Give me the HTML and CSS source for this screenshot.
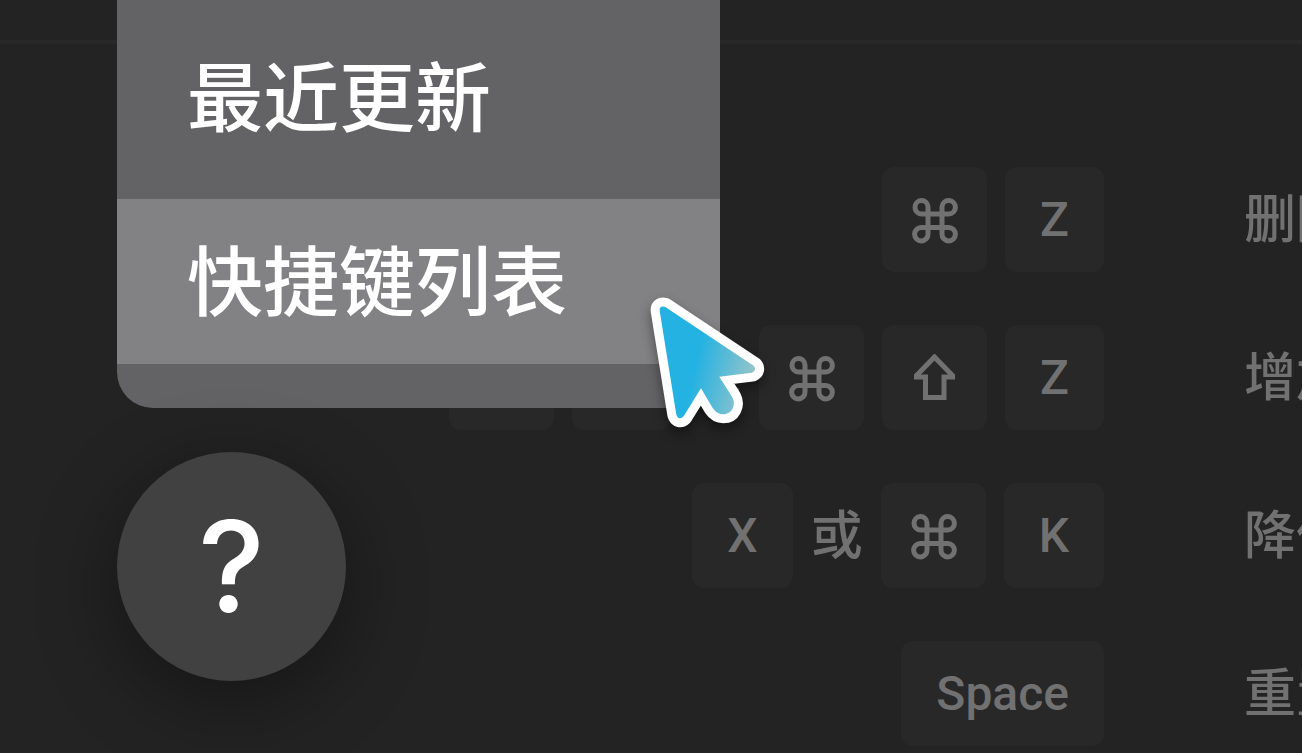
FILE: index.html
```html
<!DOCTYPE html>
<html lang="zh-CN">
<head>
    <meta charset="UTF-8">
    <meta name="viewport" content="width=device-width, initial-scale=1.0">
    <title>快捷键列表</title>
    <link rel="stylesheet" href="styles.css">
</head>
<body>
    <svg class="symbols" aria-hidden="true">
        <symbol id="command" viewBox="0 0 48 48">
            <path d="M17 18H10.500A6.500 6.700 0 1 1 17 11V38A6.700 6.700 0 1 1 10.300 31.500H37.700A6.700 6.700 0 1 1 31 38V11A6.700 6.700 0 1 1 37.700 18Z"/>
        </symbol>
        <symbol id="shift" viewBox="0 0 48 48">
            <path d="M23.500 3L41.500 21.500V23H33V43.500H14.500V23H5.500V21.500Z"/>
        </symbol>
    </svg>

    <header class="topbar"></header>

    <main class="shortcuts">
        <div class="row">
            <div class="keys">
                <kbd><svg class="icon"><use href="#command"/></svg></kbd>
                <kbd>Z</kbd>
            </div>
            <div class="label">删除</div>
        </div>
        <div class="row">
            <div class="keys">
                <kbd><svg class="icon"><use href="#command"/></svg></kbd>
                <kbd>Y</kbd>
                <span>或</span>
                <kbd><svg class="icon"><use href="#command"/></svg></kbd>
                <kbd><svg class="icon"><use href="#shift"/></svg></kbd>
                <kbd>Z</kbd>
            </div>
            <div class="label">增加</div>
        </div>
        <div class="row">
            <div class="keys">
                <kbd>X</kbd>
                <span>或</span>
                <kbd><svg class="icon"><use href="#command"/></svg></kbd>
                <kbd>K</kbd>
            </div>
            <div class="label">降低</div>
        </div>
        <div class="row">
            <div class="keys">
                <kbd>Space</kbd>
            </div>
            <div class="label">重置</div>
        </div>
    </main>

    <nav class="menu">
        <button class="menu-item">最近更新</button>
        <button class="menu-item active">快捷键列表</button>
    </nav>

    <button class="help">?</button>

    <svg class="cursor" viewBox="80 70 366 420" aria-hidden="true">
        <defs>
            <linearGradient id="cursor-fill" gradientUnits="userSpaceOnUse" x1="235" y1="250" x2="405" y2="290">
                <stop offset="0" stop-color="#24b2e2"/>
                <stop offset="1" stop-color="#94c4ca"/>
            </linearGradient>
        </defs>
        <path d="M118 123Q117 107 135 112L400 288Q411 301 395 309L297 321L336 383C348 407 335 434 309 434Q290 434 277 415L242 356L190 440Q176 454 168 435Z"/>
    </svg>
</body>
</html>
```
FILE: styles.css
```css
body {
    font-family: Roboto, "Noto Sans CJK SC", sans-serif;
    margin: 0;
    min-height: 100vh;
    background-color: #232323;
    color: #717171;
    overflow: hidden;
    position: relative;
}
.symbols {
    display: none;
}
.topbar {
    height: 40px;
    border-bottom: 4px solid #282828;
}
.shortcuts {
    display: flex;
    flex-direction: column;
    gap: 53px;
    padding-top: 123px;
}
.row {
    display: grid;
    grid-template-columns: 1fr 198px;
    align-items: center;
    font-size: 48px;
    font-weight: 500;
    line-height: 60px;
}
.keys {
    display: flex;
    justify-content: flex-end;
    align-items: center;
    gap: 18px;
}
.keys span,
.label {
    padding-bottom: 8px;
    font-family: "Noto Sans CJK SC", sans-serif;
    font-size: 52px;
}
.keys kbd {
    box-sizing: border-box;
    display: flex;
    align-items: center;
    height: 105px;
    padding: 0 35px;
    border-radius: 12px;
    background-color: #282828;
    font-family: inherit;
}
.keys kbd:has(svg) {
    padding: 0 28px 0 29px;
}
.icon {
    width: 48px;
    height: 48px;
    fill: none;
    stroke: #717171;
    stroke-width: 5;
}
.label {
    padding-left: 140px;
    white-space: nowrap;
    overflow: hidden;
}
.menu {
    box-sizing: border-box;
    position: absolute;
    top: 0;
    left: 117px;
    width: 603px;
    padding: 15px 0 44px;
    display: flex;
    flex-direction: column;
    gap: 19px;
    border-radius: 0 0 36px 36px;
    background-color: #636365;
}
.menu-item {
    height: 165px;
    padding: 0 70px 10px;
    border: none;
    background: none;
    color: #fff;
    font-family: "Noto Sans CJK SC", sans-serif;
    font-size: 76px;
    font-weight: 500;
    line-height: 90px;
    text-align: left;
    cursor: pointer;
}
.menu-item.active {
    background-color: #828284;
}
.help {
    position: absolute;
    left: 117px;
    bottom: 72px;
    width: 229px;
    height: 229px;
    padding: 0 0 2px;
    border: none;
    border-radius: 50%;
    background-color: #414141;
    box-shadow: 0 20px 80px rgba(0, 0, 0, 0.4);
    color: #fff;
    font-family: Inter, sans-serif;
    font-size: 126px;
    font-weight: 500;
    cursor: pointer;
}
.cursor {
    position: absolute;
    left: 647px;
    top: 293px;
    width: 122px;
    height: 140px;
    overflow: visible;
    fill: url(#cursor-fill);
    stroke: #fff;
    stroke-width: 54;
    stroke-linejoin: round;
    paint-order: stroke;
    filter: drop-shadow(0 6px 6px rgba(0, 0, 0, 0.4));
    pointer-events: none;
}
```
